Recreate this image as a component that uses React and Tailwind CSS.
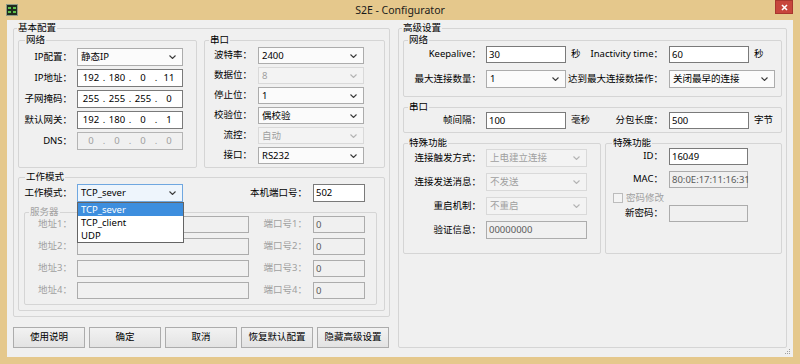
import React from "react";

const Chevron = ({ disabled }) => (
  <svg width="7" height="4" viewBox="0 0 7 4" className="shrink-0">
    <path d="M0.5 0.5 L3.5 3.5 L6.5 0.5" fill="none" stroke={disabled ? "#b4b4b4" : "#3a3a3a"} strokeWidth="1.1" />
  </svg>
);

function Select({ value, w, h = "h-[18px]", disabled, open, children }) {
  const tone = open
    ? "border-[#6fa7e0] bg-[#eef5fc] text-black"
    : disabled
    ? "border-[#d9d9d9] bg-[#f3f3f3] text-[#a0a0a0]"
    : "border-[#acacac] bg-[#fbfbfb] text-black";
  return (
    <div className={`relative ${w} ${h} shrink-0 flex items-center justify-between border pl-[3px] pr-[6px] leading-none ${tone}`}>
      <span>{value}</span>
      <Chevron disabled={disabled} />
      {children}
    </div>
  );
}

function Input({ value, w, h = "h-[18px]", disabled, dark }) {
  const tone = disabled
    ? dark
      ? "border-[#acacac] bg-[#f0f0f0] text-[#5a5a5a]"
      : "border-[#acacac] bg-[#f0f0f0] text-[#8c8c8c]"
    : "border-[#7a7a7a] bg-white text-black";
  return (
    <div className={`${w} ${h} shrink-0 flex items-center border pl-[2px] leading-none ${tone}`}>
      {value}
    </div>
  );
}

function IpInput({ parts, disabled }) {
  const tone = disabled ? "border-[#b4b4b4] bg-[#f0f0f0] text-[#a0a0a0]" : "border-[#7a7a7a] bg-white text-black";
  return (
    <div className={`w-[106px] h-[18px] shrink-0 flex items-center border pl-[2px] leading-none ${tone}`}>
      {parts.map((p, i) => (
        <React.Fragment key={i}>
          <span className="w-[22px] text-center">{p}</span>
          {i < 3 && <span className="w-[4px] text-center">.</span>}
        </React.Fragment>
      ))}
    </div>
  );
}

function Group({ label, className = "", labelClass = "left-[4px] text-black", children }) {
  return (
    <div className={`relative shrink-0 border border-[#d5d5d5] rounded-[2px] ${className}`}>
      <span className={`absolute top-[-7px] bg-[#f0f0f0] px-[1px] leading-[12px] ${labelClass}`}>{label}</span>
      {children}
    </div>
  );
}

function Row({ label, lw, gap = "ml-[5px]", lc = "text-black", children }) {
  return (
    <div className="flex items-center">
      <div className={`${lw} shrink-0 text-right whitespace-nowrap ${lc}`}>{label}</div>
      <div className={`flex items-center ${gap}`}>{children}</div>
    </div>
  );
}

function Btn({ children }) {
  return (
    <div className="w-[72px] h-[21px] flex items-center justify-center border border-[#acacac] bg-gradient-to-b from-[#f2f2f2] to-[#e3e3e3] text-black">
      {children}
    </div>
  );
}

function AppIcon() {
  return (
    <svg width="12" height="12" viewBox="0 0 12 12">
      <rect x="0.5" y="0.5" width="11" height="11" fill="#1f2a1c" stroke="#8f9a86" />
      <rect x="2" y="3" width="3" height="2" fill="#5fc24a" />
      <rect x="7" y="3" width="3" height="2" fill="#5fc24a" />
      <rect x="2" y="7" width="3" height="2" fill="#5fc24a" />
      <rect x="7" y="7" width="3" height="2" fill="#5fc24a" />
    </svg>
  );
}

export default function App() {
  return (
    <div className="w-[800px] h-[364px] bg-[#e5c88c] flex flex-col text-[9.5px] text-black font-['Noto_Sans','Noto_Sans_CJK_SC',sans-serif]">
      {/* Title bar */}
      <div className="h-[20px] shrink-0 grid grid-cols-[1fr_auto_1fr] items-center">
        <div className="pl-[6px] flex items-center">
          <AppIcon />
        </div>
        <div className="text-[10.5px] text-[#1a1a1a] leading-none">S2E - Configurator</div>
        <div className="flex justify-end self-start pr-[7px]">
          <div className="w-[18px] h-[14px] bg-[#c7463c] border border-[#a8362e] flex items-center justify-center">
            <svg width="7" height="7" viewBox="0 0 7 7">
              <path d="M1 1 L6 6 M6 1 L1 6" stroke="white" strokeWidth="1.6" />
            </svg>
          </div>
        </div>
      </div>

      {/* Client area */}
      <div className="relative mx-[7px] h-[337px] shrink-0 bg-[#f0f0f0] flex gap-[8px] pl-[6px] pt-[8px]">
        {/* Left column */}
        <div className="w-[377px] flex flex-col">
          <Group label="基本配置" labelClass="left-[3px] text-black" className="w-[377px] h-[289px] pt-[11px] pl-[4px]">
            <div className="flex gap-[7px]">
              <Group label="网络" labelClass="left-[6px] text-black" className="w-[179px] h-[128px] pt-[7px]">
                <div className="flex flex-col gap-[3px]">
                  <Row label="IP配置：" lw="w-[53px]">
                    <Select w="w-[106px]" value="静态IP" />
                  </Row>
                  <Row label="IP地址：" lw="w-[53px]">
                    <IpInput parts={["192", "180", "0", "11"]} />
                  </Row>
                  <Row label="子网掩码：" lw="w-[53px]">
                    <IpInput parts={["255", "255", "255", "0"]} />
                  </Row>
                  <Row label="默认网关：" lw="w-[53px]">
                    <IpInput parts={["192", "180", "0", "1"]} />
                  </Row>
                  <Row label="DNS：" lw="w-[53px]">
                    <IpInput parts={["0", "0", "0", "0"]} disabled />
                  </Row>
                </div>
              </Group>
              <Group label="串口" className="w-[181px] h-[128px] pt-[6px]">
                <div className="flex flex-col gap-[3px]">
                  <Row label="波特率：" lw="w-[47px]" gap="ml-[6px]">
                    <Select w="w-[106px]" h="h-[17px]" value="2400" />
                  </Row>
                  <Row label="数据位：" lw="w-[47px]" gap="ml-[6px]">
                    <Select w="w-[106px]" h="h-[17px]" value="8" disabled />
                  </Row>
                  <Row label="停止位：" lw="w-[47px]" gap="ml-[6px]">
                    <Select w="w-[106px]" h="h-[17px]" value="1" />
                  </Row>
                  <Row label="校验位：" lw="w-[47px]" gap="ml-[6px]">
                    <Select w="w-[106px]" h="h-[17px]" value="偶校验" />
                  </Row>
                  <Row label="流控：" lw="w-[47px]" gap="ml-[6px]">
                    <Select w="w-[106px]" h="h-[17px]" value="自动" disabled />
                  </Row>
                  <Row label="接口：" lw="w-[47px]" gap="ml-[6px]">
                    <Select w="w-[106px]" h="h-[17px]" value="RS232" />
                  </Row>
                </div>
              </Group>
            </div>

            <Group label="工作模式" labelClass="left-[6px] text-black" className="mt-[9px] w-[367px] h-[134px] pt-[6px]">
              <div className="flex items-center">
                <Row label="工作模式：" lw="w-[53px]">
                  <Select w="w-[106px]" value="TCP_sever" open>
                    <div className="absolute left-[-1px] top-[17px] w-[107px] border border-[#646464] bg-white z-10 flex flex-col">
                      <div className="h-[13px] flex items-center pl-[3px] bg-[#3d8ede] text-white">TCP_sever</div>
                      <div className="h-[13px] flex items-center pl-[3px] text-black">TCP_client</div>
                      <div className="h-[13px] flex items-center pl-[3px] text-black">UDP</div>
                    </div>
                  </Select>
                </Row>
                <div className="w-[124px] text-right whitespace-nowrap">本机端口号：</div>
                <div className="ml-[6px]">
                  <Input w="w-[52px]" value="502" />
                </div>
              </div>
              <Group label="服务器" labelClass="left-[4px] text-[#a0a0a0]" className="ml-[5px] mt-[10px] w-[353px] h-[93px] pt-[3px]">
                <div className="flex flex-col gap-[5px]">
                  {["1", "2", "3", "4"].map((n) => (
                    <div key={n} className="flex items-center">
                      <Row label={`地址${n}：`} lw="w-[47px]" lc="text-[#a0a0a0]">
                        <Input w="w-[172px]" h="h-[17px]" value="" disabled />
                      </Row>
                      <div className="w-[58px] text-right whitespace-nowrap text-[#a0a0a0]">{`端口号${n}：`}</div>
                      <div className="ml-[6px]">
                        <Input w="w-[52px]" h="h-[17px]" value="0" disabled dark />
                      </div>
                    </div>
                  ))}
                </div>
              </Group>
            </Group>
          </Group>

          <div className="mt-[10px] flex gap-[4px]">
            <Btn>使用说明</Btn>
            <Btn>确定</Btn>
            <Btn>取消</Btn>
            <Btn>恢复默认配置</Btn>
            <Btn>隐藏高级设置</Btn>
          </div>
        </div>

        {/* Right column */}
        <Group label="高级设置" labelClass="left-[3px] text-black" className="w-[389px] h-[320px] pt-[11px] pl-[4px]">
          <Group label="网络" className="w-[379px] h-[57px] pt-[5px]">
            <div className="flex items-center h-[17px]">
              <div className="w-[77px] text-right whitespace-nowrap">Keepalive：</div>
              <div className="ml-[5px]"><Input w="w-[80px]" h="h-[17px]" value="30" /></div>
              <div className="ml-[5px] w-[12px]">秒</div>
              <div className="w-[80px] text-right whitespace-nowrap">Inactivity time：</div>
              <div className="ml-[6px]"><Input w="w-[80px]" h="h-[17px]" value="60" /></div>
              <div className="ml-[5px]">秒</div>
            </div>
            <div className="flex items-center mt-[7px]">
              <div className="w-[77px] text-right whitespace-nowrap">最大连接数量：</div>
              <div className="ml-[5px]"><Select w="w-[80px]" value="1" /></div>
              <div className="w-[97px] text-right whitespace-nowrap">达到最大连接数操作：</div>
              <div className="ml-[6px]"><Select w="w-[106px]" value="关闭最早的连接" /></div>
            </div>
          </Group>

          <Group label="串口" className="mt-[10px] w-[379px] h-[26px] pt-[4px]">
            <div className="flex items-center h-[17px]">
              <div className="w-[77px] text-right whitespace-nowrap">帧间隔：</div>
              <div className="ml-[5px]"><Input w="w-[80px]" h="h-[17px]" value="100" /></div>
              <div className="ml-[5px] w-[20px] whitespace-nowrap">毫秒</div>
              <div className="w-[72px] text-right whitespace-nowrap">分包长度：</div>
              <div className="ml-[6px]"><Input w="w-[80px]" h="h-[17px]" value="500" /></div>
              <div className="ml-[5px] whitespace-nowrap">字节</div>
            </div>
          </Group>

          <div className="mt-[10px] flex gap-[4px]">
            <Group label="特殊功能" className="w-[198px] h-[111px] pt-[5px]">
              <div className="flex flex-col gap-[6px]">
                <Row label="连接触发方式：" lw="w-[77px]">
                  <Select w="w-[101px]" value="上电建立连接" disabled />
                </Row>
                <Row label="连接发送消息：" lw="w-[77px]">
                  <Select w="w-[101px]" value="不发送" disabled />
                </Row>
                <Row label="重启机制：" lw="w-[77px]">
                  <Select w="w-[101px]" value="不重启" disabled />
                </Row>
                <Row label="验证信息：" lw="w-[77px]">
                  <Input w="w-[101px]" value="00000000" disabled dark />
                </Row>
              </div>
            </Group>
            <Group label="特殊功能" labelClass="left-[6px] text-black" className="w-[177px] h-[111px] pt-[4px]">
              <div className="flex flex-col">
                <Row label="ID：" lw="w-[57px]" gap="ml-[6px]">
                  <Input w="w-[79px]" h="h-[17px]" value="16049" />
                </Row>
                <div className="mt-[6px]">
                  <Row label="MAC：" lw="w-[57px]" gap="ml-[6px]">
                    <Input w="w-[79px]" h="h-[17px]" value="80:0E:17:11:16:31" disabled dark />
                  </Row>
                </div>
                <div className="mt-[5px] ml-[7px] h-[10px] flex items-center gap-[3px] text-[#a0a0a0]">
                  <div className="w-[10px] h-[10px] border border-[#bcbcbc] bg-[#f4f4f4]" />
                  <span className="leading-none">密码修改</span>
                </div>
                <div className="mt-[2px]">
                  <Row label="新密码：" lw="w-[57px]" gap="ml-[6px]">
                    <Input w="w-[79px]" h="h-[17px]" value="" disabled />
                  </Row>
                </div>
              </div>
            </Group>
          </div>
        </Group>

        {/* resize grip */}
        <svg width="6" height="6" viewBox="0 0 6 6" className="absolute right-[2px] bottom-[2px]">
          <rect x="4" y="0" width="1" height="1" fill="#a0a0a0" />
          <rect x="2" y="2" width="1" height="1" fill="#a0a0a0" />
          <rect x="4" y="2" width="1" height="1" fill="#a0a0a0" />
          <rect x="0" y="4" width="1" height="1" fill="#a0a0a0" />
          <rect x="2" y="4" width="1" height="1" fill="#a0a0a0" />
          <rect x="4" y="4" width="1" height="1" fill="#a0a0a0" />
        </svg>
      </div>
    </div>
  );
}
